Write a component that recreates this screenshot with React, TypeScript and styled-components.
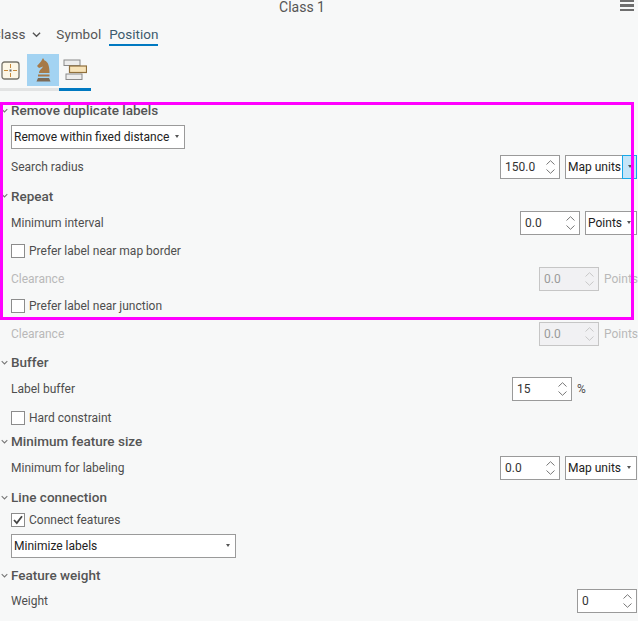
import styled, { createGlobalStyle } from 'styled-components';

const GlobalStyle = createGlobalStyle`
  html, body {
    margin: 0;
    padding: 0;
    background: #f7f8f8;
  }
  body {
    font-family: Roboto, "Open Sans", sans-serif;
    font-size: 12px;
    color: #4e4e4e;
  }
`;

const Pane = styled.div`
  position: relative;
  width: 638px;
  height: 621px;
  overflow: hidden;
  background: #f7f8f8;
`;

const TitleBar = styled.div`
  position: relative;
  height: 14px;
  line-height: 14px;
  padding-right: 34px;
  text-align: center;
  font-size: 14px;
  color: #555;
`;

const Menu = styled.div`
  position: absolute;
  right: 4px;
  top: 0;
  width: 14px;
  height: 12px;
  background: repeating-linear-gradient(#6e6e6e 0 2.5px, transparent 2.5px 4.5px);
`;

const Tabs = styled.div`
  display: flex;
  align-items: flex-start;
  height: 30px;
  margin: 10px 0 0 -8px;
  font-size: 13.5px;
`;

const Tab = styled.div<{ $active?: boolean }>`
  height: 20px;
  line-height: 20px;
  margin-right: 8px;
  color: ${({ $active }) => ($active ? '#3d5b6e' : '#555')};
  border-bottom: 2px solid ${({ $active }) => ($active ? '#0079c1' : 'transparent')};
`;

const ClassTab = styled(Tab)`
  display: flex;
  align-items: center;
  gap: 7px;
  margin-right: 15px;
`;

const IconRow = styled.div`
  display: flex;
  height: 32px;
  margin-bottom: 2px;
`;

const IconSlot = styled.div<{ $w: number; $selected?: boolean }>`
  display: flex;
  align-items: center;
  justify-content: center;
  width: ${({ $w }) => $w}px;
  height: 32px;
  background: ${({ $selected }) => ($selected ? '#a3d3f2' : 'transparent')};
`;

const FirstIconSlot = styled(IconSlot)`
  justify-content: flex-start;
  padding-left: 1px;
`;

const IconUnderline = styled.div`
  display: flex;
  height: 3px;
  width: 91px;
  margin-bottom: 7px;
`;

const UnderlinePart = styled.div<{ $w: number; $color: string }>`
  width: ${({ $w }) => $w}px;
  background: ${({ $color }) => $color};
`;

const Heading = styled.div<{ $h?: number }>`
  display: flex;
  align-items: center;
  height: ${({ $h }) => $h ?? 24}px;
  padding-left: 1px;
  gap: 3px;
  font-size: 13.5px;
  font-weight: 500;
  color: #555;
`;

const Row = styled.div<{ $h: number; $disabled?: boolean }>`
  display: flex;
  align-items: center;
  box-sizing: border-box;
  height: ${({ $h }) => $h}px;
  padding: 0 1px 0 11px;
  color: ${({ $disabled }) => ($disabled ? '#b9b9b9' : '#4e4e4e')};
`;

const CheckRow = styled(Row)`
  padding-top: 2px;
`;

const Controls = styled.div`
  display: flex;
  align-items: center;
  gap: 5px;
  margin-left: auto;
`;

const Spinner = styled.div<{ $disabled?: boolean }>`
  display: flex;
  align-items: center;
  justify-content: space-between;
  box-sizing: border-box;
  width: 60px;
  height: 24px;
  padding: 0 4px;
  border: 1px solid ${({ $disabled }) => ($disabled ? '#c6c6c6' : '#9a9a9a')};
  background: ${({ $disabled }) => ($disabled ? '#f1f1f3' : '#fff')};
  color: ${({ $disabled }) => ($disabled ? '#9a9a9a' : '#333')};
`;

const Arrows = styled.div`
  display: flex;
  flex-direction: column;
  gap: 4px;
`;

const Select = styled.div<{ $w: number }>`
  display: flex;
  align-items: center;
  justify-content: space-between;
  box-sizing: border-box;
  width: ${({ $w }) => $w}px;
  height: 24px;
  padding-left: 2px;
  border: 1px solid #9a9a9a;
  background: #fff;
  color: #222;
  white-space: nowrap;
`;

const Caret = styled.div<{ $hover?: boolean }>`
  display: flex;
  align-items: center;
  justify-content: center;
  box-sizing: border-box;
  align-self: stretch;
  width: 15px;
  margin: ${({ $hover }) => ($hover ? '-1px -1px -1px 0' : '0')};
  border: ${({ $hover }) => ($hover ? '1px solid #18a8e8' : 'none')};
  background: ${({ $hover }) => ($hover ? '#c5e5f8' : 'transparent')};
  &::after {
    content: '';
    border-left: 2.5px solid transparent;
    border-right: 2.5px solid transparent;
    border-top: 3px solid #555;
  }
`;

const Unit = styled.div<{ $w: number }>`
  width: ${({ $w }) => $w}px;
  white-space: nowrap;
`;

const Check = styled.div`
  display: flex;
  align-items: center;
  justify-content: center;
  box-sizing: border-box;
  width: 14px;
  height: 14px;
  margin-right: 4px;
  border: 1px solid #8c8c8c;
  background: #fff;
`;

const Highlight = styled.div`
  position: absolute;
  left: 0;
  top: 102px;
  width: 634px;
  height: 218px;
  box-sizing: border-box;
  border: 3px solid #ff00ff;
  pointer-events: none;
`;

function Chevron({ size = 9, color = '#555' }: { size?: number; color?: string }) {
  return (
    <svg width={size} height={size} viewBox="0 0 10 10" fill="none">
      <path d="M1 3 L5 7 L9 3" stroke={color} strokeWidth="1.5" />
    </svg>
  );
}

function Section({ title, h }: { title: string; h?: number }) {
  return (
    <Heading $h={h}>
      <Chevron size={7} color="#777" />
      {title}
    </Heading>
  );
}

function Spin({ value, disabled }: { value: string; disabled?: boolean }) {
  const c = disabled ? '#c8c8c8' : '#777';
  return (
    <Spinner $disabled={disabled}>
      {value}
      <Arrows>
        <svg width="9" height="5" viewBox="0 0 9 5" fill="none">
          <path d="M0.5 4.5 L4.5 0.7 L8.5 4.5" stroke={c} />
        </svg>
        <svg width="9" height="5" viewBox="0 0 9 5" fill="none">
          <path d="M0.5 0.5 L4.5 4.3 L8.5 0.5" stroke={c} />
        </svg>
      </Arrows>
    </Spinner>
  );
}

function CheckBox({ checked }: { checked?: boolean }) {
  return (
    <Check>
      {checked && (
        <svg width="12" height="12" viewBox="0 0 12 12" fill="none">
          <path d="M2 6 L4.8 9 L10 2.3" stroke="#444" strokeWidth="1.8" />
        </svg>
      )}
    </Check>
  );
}

export default function App() {
  return (
    <Pane>
      <GlobalStyle />
      <TitleBar>
        Class 1
        <Menu />
      </TitleBar>
      <Tabs>
        <ClassTab>
          Class
          <Chevron />
        </ClassTab>
        <Tab>Symbol</Tab>
        <Tab $active>Position</Tab>
      </Tabs>
      <IconRow>
        <FirstIconSlot $w={26}>
          <svg width="19" height="19" viewBox="0 0 19 19">
            <rect x="1" y="1" width="17" height="17" rx="2.5" fill="#fdf7e6" stroke="#77746a" strokeWidth="1.3" />
            <path d="M9.5 3v4M9.5 12v4M3 9.5h4M12 9.5h4" stroke="#c98a3a" />
            <rect x="8.5" y="8.5" width="2" height="2" fill="#666" />
          </svg>
        </FirstIconSlot>
        <IconSlot $w={32} $selected>
          <svg width="15" height="24" viewBox="0 0 15 24" fill="#a67a48">
            <path d="M7 0 L8.5 2.5 C12 3.5 13.5 8 13.5 15 L3 15 C3 12 6 11 7 8.5 L3 10 L1 8 L5 3.5 Z" />
            <rect x="2" y="16.5" width="11.5" height="2" />
            <path d="M2 20 H13 L14.5 23.5 H0.5 Z" fill="#7d6a55" />
          </svg>
        </IconSlot>
        <IconSlot $w={32}>
          <svg width="24" height="22" viewBox="0 0 24 22" fill="none">
            <rect x="1" y="1" width="16" height="5.5" fill="#ececec" stroke="#8a8a8a" />
            <rect x="3" y="15" width="16" height="5.5" fill="#ececec" stroke="#8a8a8a" />
            <rect x="6.5" y="7" width="17" height="6.5" fill="#f7e3b8" stroke="#8f6f3c" strokeWidth="1.2" />
          </svg>
        </IconSlot>
      </IconRow>
      <IconUnderline>
        <UnderlinePart $w={59} $color="#e2e3e3" />
        <UnderlinePart $w={32} $color="#0079c1" />
      </IconUnderline>

      <Section title="Remove duplicate labels" />
      <Row $h={29}>
        <Select $w={174}>
          Remove within fixed distance
          <Caret />
        </Select>
      </Row>
      <Row $h={31}>
        Search radius
        <Controls>
          <Spin value="150.0" />
          <Select $w={72}>
            Map units
            <Caret $hover />
          </Select>
        </Controls>
      </Row>
      <Section title="Repeat" h={27} />
      <Row $h={27}>
        Minimum interval
        <Controls>
          <Spin value="0.0" />
          <Select $w={52}>
            Points
            <Caret />
          </Select>
        </Controls>
      </Row>
      <CheckRow $h={28}>
        <CheckBox />
        Prefer label near map border
      </CheckRow>
      <Row $h={29} $disabled>
        Clearance
        <Controls>
          <Spin value="0.0" disabled />
          <Unit $w={33}>Points</Unit>
        </Controls>
      </Row>
      <CheckRow $h={24}>
        <CheckBox />
        Prefer label near junction
      </CheckRow>
      <Row $h={33} $disabled>
        Clearance
        <Controls>
          <Spin value="0.0" disabled />
          <Unit $w={33}>Points</Unit>
        </Controls>
      </Row>
      <Section title="Buffer" />
      <Row $h={30}>
        Label buffer
        <Controls>
          <Spin value="15" />
          <Unit $w={60}>%</Unit>
        </Controls>
      </Row>
      <CheckRow $h={25}>
        <CheckBox />
        Hard constraint
      </CheckRow>
      <Section title="Minimum feature size" />
      <Row $h={29}>
        Minimum for labeling
        <Controls>
          <Spin value="0.0" />
          <Select $w={72}>
            Map units
            <Caret />
          </Select>
        </Controls>
      </Row>
      <Section title="Line connection" h={30} />
      <Row $h={16}>
        <CheckBox checked />
        Connect features
      </Row>
      <Row $h={35}>
        <Select $w={225}>
          Minimize labels
          <Caret />
        </Select>
      </Row>
      <Section title="Feature weight" />
      <Row $h={27}>
        Weight
        <Controls>
          <Spin value="0" />
        </Controls>
      </Row>
      <Highlight />
    </Pane>
  );
}
